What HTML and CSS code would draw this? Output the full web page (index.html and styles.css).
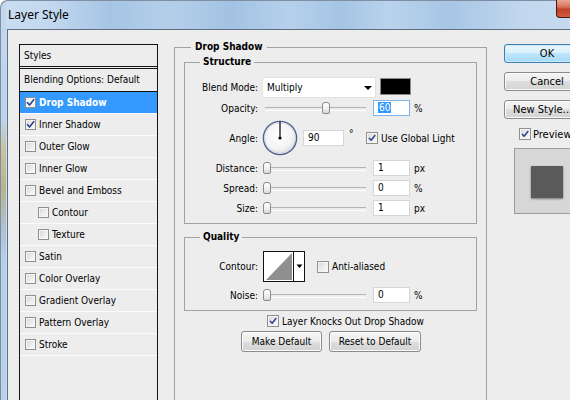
FILE: index.html
```html
<!DOCTYPE html>
<html>
<head>
<meta charset="utf-8">
<title>Layer Style</title>
<link rel="stylesheet" href="styles.css">
</head>
<body>
<div class="window">
  <div class="titlebar">
    <span class="title">Layer Style</span>
    <span class="close"></span>
  </div>
  <div class="client">
    <div class="styles-panel">
      <div class="sp-head">Styles</div>
      <div class="sp-blend">Blending Options: Default</div>
      <div class="sp-row selected"><span class="cb small checked"><svg viewBox="0 0 10 10"><path d="M1.6 5.2 L4 7.8 L8.6 1.8" /></svg></span>Drop Shadow</div>
      <div class="sp-row"><span class="cb small checked"><svg viewBox="0 0 10 10"><path d="M1.6 5.2 L4 7.8 L8.6 1.8" /></svg></span>Inner Shadow</div>
      <div class="sp-row"><span class="cb small"></span>Outer Glow</div>
      <div class="sp-row"><span class="cb small"></span>Inner Glow</div>
      <div class="sp-row"><span class="cb small"></span>Bevel and Emboss</div>
      <div class="sp-row sub"><span class="cb small"></span>Contour</div>
      <div class="sp-row sub"><span class="cb small"></span>Texture</div>
      <div class="sp-row"><span class="cb small"></span>Satin</div>
      <div class="sp-row"><span class="cb small"></span>Color Overlay</div>
      <div class="sp-row"><span class="cb small"></span>Gradient Overlay</div>
      <div class="sp-row"><span class="cb small"></span>Pattern Overlay</div>
      <div class="sp-row"><span class="cb small"></span>Stroke</div>
    </div>

    <fieldset class="group main">
      <legend>Drop Shadow</legend>

      <fieldset class="group inner structure">
        <legend>Structure</legend>
        <div class="row blend">
          <span class="lbl">Blend Mode:</span>
          <div class="select"><span>Multiply</span><span class="arrow"></span></div>
          <span class="swatch"></span>
        </div>
        <div class="row">
          <span class="lbl">Opacity:</span>
          <div class="slider"><span class="thumb" style="left:60px"></span></div>
          <div class="field focus"><span class="sel">60</span></div>
          <span class="unit">%</span>
        </div>
        <div class="row angle">
          <span class="lbl">Angle:</span>
          <svg class="dial" width="36" height="36" viewBox="0 0 36 36">
            <defs>
              <radialGradient id="dg" cx="45%" cy="40%" r="60%">
                <stop offset="0" stop-color="#ffffff"/>
                <stop offset="0.7" stop-color="#f3f3f3"/>
                <stop offset="1" stop-color="#dcdcdc"/>
              </radialGradient>
            </defs>
            <circle cx="18" cy="18" r="16.6" fill="url(#dg)" stroke="#52638f" stroke-width="1.4"/>
            <circle cx="18" cy="18" r="15.4" fill="none" stroke="#c9d0de" stroke-width="0.8"/>
            <line x1="18" y1="1.5" x2="18" y2="18" stroke="#000" stroke-width="1.2"/>
            <circle cx="18" cy="18" r="1.6" fill="#000"/>
          </svg>
          <div class="field wide">90</div>
          <span class="deg">°</span>
          <span class="cb checked"><svg viewBox="0 0 10 10"><path d="M1.6 5.2 L4 7.8 L8.6 1.8" /></svg></span>
          <span class="cb-label">Use Global Light</span>
        </div>
        <div class="row">
          <span class="lbl">Distance:</span>
          <div class="slider"><span class="thumb" style="left:1px"></span></div>
          <div class="field">1</div>
          <span class="unit">px</span>
        </div>
        <div class="row">
          <span class="lbl">Spread:</span>
          <div class="slider"><span class="thumb" style="left:1px"></span></div>
          <div class="field">0</div>
          <span class="unit">%</span>
        </div>
        <div class="row">
          <span class="lbl">Size:</span>
          <div class="slider"><span class="thumb" style="left:1px"></span></div>
          <div class="field">1</div>
          <span class="unit">px</span>
        </div>
      </fieldset>

      <fieldset class="group inner quality">
        <legend>Quality</legend>
        <div class="row contour-row">
          <span class="lbl">Contour:</span>
          <svg class="contour" width="42" height="31" viewBox="0 0 42 31">
            <rect x="0.5" y="0.5" width="41" height="30" fill="#fff" stroke="#111"/>
            <polygon points="3,29 29,2 29,29" fill="#8f8f8f"/>
            <line x1="30.5" y1="1" x2="30.5" y2="30" stroke="#111"/>
            <polygon points="33.5,13.5 39.5,13.5 36.5,17" fill="#000"/>
          </svg>
          <span class="cb aa"></span>
          <span class="cb-label">Anti-aliased</span>
        </div>
        <div class="row noise">
          <span class="lbl">Noise:</span>
          <div class="slider"><span class="thumb" style="left:1px"></span></div>
          <div class="field">0</div>
          <span class="unit">%</span>
        </div>
      </fieldset>

      <div class="knock">
        <span class="cb checked"><svg viewBox="0 0 10 10"><path d="M1.6 5.2 L4 7.8 L8.6 1.8" /></svg></span>
        <span class="cb-label">Layer Knocks Out Drop Shadow</span>
      </div>
      <div class="defaults">
        <button class="btn make">Make Default</button>
        <button class="btn reset">Reset to Default</button>
      </div>
    </fieldset>

    <div class="side">
      <button class="btn side-btn default">OK</button>
      <button class="btn side-btn">Cancel</button>
      <button class="btn side-btn newstyle">New Style...</button>
      <div class="preview-row">
        <span class="cb checked"><svg viewBox="0 0 10 10"><path d="M1.6 5.2 L4 7.8 L8.6 1.8" /></svg></span>
        <span class="cb-label">Preview</span>
      </div>
      <div class="preview-box"><div class="preview-square"></div></div>
    </div>
  </div>
</div>
</body>
</html>
```

FILE: styles.css
```css
* { box-sizing: border-box; }
html, body { margin: 0; padding: 0; background: #ffffff; }
body {
  width: 570px;
  height: 400px;
  overflow: hidden;
  font-family: "DejaVu Sans Condensed", "DejaVu Sans", sans-serif;
  font-stretch: condensed;
  font-size: 10px;
  color: #000;
}

.window {
  width: 570px;
  height: 400px;
  display: flex;
  flex-direction: column;
  overflow: hidden;
  border-radius: 7px 0 0 0;
  box-shadow: inset 1px 1px 0 #7f8fa3;
  background:
    linear-gradient(to bottom, #c3d8ee 0, #bcd3ec 120px, #c9c29e 150px, #b7b48a 190px, #aec3d6 232px, #b6cfe9 260px, #b9d2ea 400px) 0 0 / 6px 100% no-repeat,
    linear-gradient(to right, #cadef2 0, #c2d8ef 50px, #a6c5e4 110px, #b4cfea 170px, #a3c2e3 230px, #b5d0eb 290px, #a5c4e4 340px, #b9d3ec 390px, #a7c6e5 450px, #c1d7ee 520px, #c6daef 570px);
}

.titlebar {
  height: 29px;
  flex: none;
  display: flex;
  align-items: flex-start;
}
.title {
  font-family: "Noto Sans", "Open Sans", sans-serif;
  font-stretch: normal;
  font-size: 12px;
  line-height: 16px;
  padding: 7px 0 0 8px;
  color: #000;
}
.close {
  margin-left: auto;
  width: 14px;
  height: 18px;
  border: 1px solid #4a1a12;
  border-top: none;
  border-right: none;
  border-radius: 0 0 0 4px;
  background: linear-gradient(to bottom, #e9a896 0, #d9735c 40%, #c0402a 55%, #cf5d3f 100%);
}

.client {
  flex: 1;
  min-height: 0;
  margin-left: 7px;
  background: #ededed;
  border-left: 1px solid #5f6f82;
  border-top: 1px solid #5f6f82;
  display: flex;
  align-items: flex-start;
  padding: 10px 0 0 11px;
  overflow: hidden;
}

/* Styles list */
.styles-panel {
  flex: none;
  width: 139px;
  height: 380px;
  margin-top: 4px;
  border: 1px solid #141414;
  background: #ededed;
}
.sp-head {
  height: 24px;
  line-height: 21px;
  padding-left: 4px;
  border-bottom: 3px double #141414;
}
.sp-blend {
  height: 23px;
  line-height: 22px;
  padding-left: 4px;
  border-bottom: 1px solid #141414;
}
.sp-row {
  height: 22px;
  display: flex;
  align-items: center;
  padding-left: 5px;
  border-bottom: 1px solid #fbfbfb;
}
.sp-row.sub { padding-left: 18px; }
.sp-row .cb { margin-right: 3px; }
.sp-row.selected {
  background: #3399ff;
  color: #fff;
  font-weight: bold;
}
.sp-row.selected .cb { background: #f4f4f4; }

/* Checkbox */
.cb {
  flex: none;
  display: inline-block;
  width: 12px;
  height: 12px;
  border: 1px solid #8e8f8f;
  background: linear-gradient(135deg, #d6d6d6 0, #f2f2f2 70%, #fafafa 100%);
  box-shadow: inset 0 0 0 1px #f6f6f6;
  padding: 1px;
}
.cb.small { width: 11px; height: 11px; padding: 0; }
.cb svg { display: block; width: 100%; height: 100%; }
.cb svg path { fill: none; stroke: #2e3f8a; stroke-width: 1.8; stroke-linecap: round; stroke-linejoin: round; }
.cb-label { margin-left: 3px; white-space: nowrap; }

/* Group boxes */
fieldset.group {
  margin: 0;
  border: 1px solid #a2a2a2;
  min-width: 0;
}
fieldset.group > legend {
  font-weight: bold;
  line-height: 14px;
}
.main {
  flex: none;
  width: 313px;
  height: 380px;
  margin-left: 16px !important;
  padding: 0 9px;
}
.main > legend {
  margin-left: 7px;
  padding: 0 4px;
}
.inner {
  padding: 0 0 7px 0;
}
.inner > legend {
  margin-left: 15px;
  padding: 0 3px;
}
.structure { margin-top: 1px !important; }
.quality { margin-top: 6px !important; }

.row {
  display: flex;
  align-items: center;
  height: 16px;
  margin-top: 4px;
  white-space: nowrap;
}
.lbl {
  flex: none;
  width: 73px;
  text-align: right;
  margin-right: 4px;
}
.row.blend { height: 21px; margin-top: 8px; }
.row.blend + .row { margin-top: 2px; }

.select {
  flex: none;
  width: 114px;
  height: 21px;
  background: #fff;
  border: 1px solid #e2e2e2;
  display: flex;
  align-items: center;
  padding-left: 4px;
}
.arrow {
  margin-left: auto;
  margin-right: 3px;
  width: 0;
  height: 0;
  border-left: 4px solid transparent;
  border-right: 4px solid transparent;
  border-top: 4px solid #000;
}
.swatch {
  flex: none;
  align-self: flex-start;
  margin: 1px 0 0 4px;
  width: 31px;
  height: 17px;
  background: #000;
  border: 1px solid #8a8a8a;
}

.slider {
  flex: none;
  position: relative;
  width: 107px;
  height: 16px;
}
.slider::before {
  content: "";
  position: absolute;
  left: 3px;
  right: 3px;
  top: 7px;
  height: 2px;
  border-top: 1px solid #b3b3b3;
  border-bottom: 1px solid #ffffff;
}
.thumb {
  position: absolute;
  top: 2px;
  width: 8px;
  height: 12px;
  border: 1px solid #8a8a8a;
  border-radius: 3px 3px 2px 2px;
  background: linear-gradient(to bottom, #ffffff 0, #eeeeee 60%, #d8d8d8 100%);
}

.field {
  flex: none;
  width: 37px;
  height: 16px;
  margin-left: 4px;
  background: #fff;
  border: 1px solid #d6d6d6;
  padding-left: 4px;
  line-height: 14px;
}
.field.focus { border-color: #7eb4ea; }
.field .sel { background: #3399ff; color: #fff; padding: 0 1px; }
.field.wide { width: 41px; margin-left: 5px; }
.unit { margin-left: 4px; }

.row.angle { height: 36px; }
.dial { flex: none; display: block; }
.deg {
  flex: none;
  width: 13px;
  margin-left: 5px;
  align-self: flex-start;
  margin-top: 9px;
  line-height: 10px;
}
.row.angle .cb { margin-left: 4px; }

.row.contour-row { height: 31px; margin-top: 7px; }
.contour { flex: none; display: block; margin-left: 1px; }
.cb.aa { margin-left: 12px; }
.row.noise { margin-top: 5px; }

.knock {
  display: flex;
  align-items: center;
  height: 12px;
  margin: 4px 0 0 83px;
  white-space: nowrap;
}
.defaults {
  display: flex;
  margin: 4px 0 0 57px;
}

.btn {
  font: inherit;
  font-stretch: condensed;
  color: #000;
  margin: 0;
  padding: 0;
  height: 21px;
  border: 1px solid #8a8a8a;
  border-radius: 3px;
  background: linear-gradient(to bottom, #f4f4f4 0, #ececec 50%, #dedede 50%, #d2d2d2 100%);
  box-shadow: inset 0 0 0 1px #fbfbfb;
  text-align: center;
  white-space: nowrap;
  overflow: hidden;
}
.btn.make { width: 81px; }
.btn.reset { width: 92px; margin-left: 7px; }

.side {
  flex: none;
  width: 86px;
  margin: 4px 0 0 17px;
  display: flex;
  flex-direction: column;
  align-items: flex-start;
}
.side-btn { width: 86px; height: 19px; font-size: 11px; }
.side-btn + .side-btn { margin-top: 9px; }
.side-btn.default {
  border-color: #3c7fb1;
  background: linear-gradient(to bottom, #eaf6fd 0, #d9f0fc 50%, #bee6fd 50%, #a7d9f5 100%);
  box-shadow: inset 0 0 0 1px #c8ecfd;
}
.side-btn.newstyle { text-align: left; padding-left: 8px; }

.preview-row {
  display: flex;
  align-items: center;
  margin: 9px 0 0 15px;
  height: 12px;
  font-size: 11px;
}
.preview-row .cb-label { margin-left: 2px; }
.preview-box {
  margin: 8px 0 0 10px;
  width: 72px;
  height: 66px;
  border: 1px solid #9c9c9c;
  background: #d7d7d7;
  padding: 17px 0 0 16px;
}
.preview-square {
  width: 32px;
  height: 32px;
  background: #5a5a5a;
  box-shadow: 0 1px 2px rgba(0, 0, 0, 0.45);
}
```
